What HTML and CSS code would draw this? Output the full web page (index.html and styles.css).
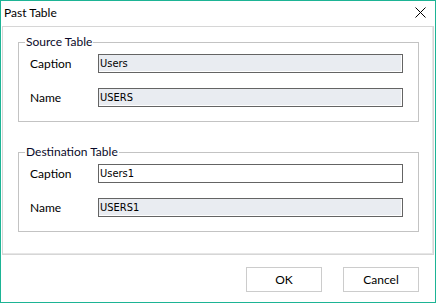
FILE: index.html
```html
<!DOCTYPE html>
<html lang="en">

<head>
    <meta charset="UTF-8">
    <title>Past Table</title>
    <link rel="stylesheet" href="styles.css">
</head>

<body>
    <div class="window">
        <div class="titlebar">
            <span class="title">Past Table</span>
            <svg class="close" width="11" height="11" viewBox="0 0 11 11">
                <path d="M0.5 0.5 L10.5 10.5 M10.5 0.5 L0.5 10.5" stroke="#000" stroke-width="1" fill="none" />
            </svg>
        </div>

        <div class="panel">
            <fieldset class="group">
                <legend>Source Table</legend>
                <div class="row">
                    <label>Caption</label>
                    <input class="field readonly" type="text" value="Users" readonly>
                </div>
                <div class="row">
                    <label>Name</label>
                    <input class="field readonly" type="text" value="USERS" readonly>
                </div>
            </fieldset>

            <fieldset class="group second">
                <legend>Destination Table</legend>
                <div class="row">
                    <label>Caption</label>
                    <input class="field" type="text" value="Users1">
                </div>
                <div class="row">
                    <label>Name</label>
                    <input class="field readonly" type="text" value="USERS1" readonly>
                </div>
            </fieldset>
        </div>

        <div class="footer">
            <button>OK</button>
            <button>Cancel</button>
        </div>
    </div>
</body>

</html>
```

FILE: styles.css
```css
body {
    margin: 0;
    font-family: 'Lato', 'Liberation Sans', sans-serif;
    font-size: 12px;
    color: #000;
}

.window {
    width: 436px;
    height: 303px;
    box-sizing: border-box;
    border: 1px solid #1db495;
    background-color: #fff;
    display: flex;
    flex-direction: column;
}

.titlebar {
    height: 25px;
    display: flex;
    align-items: center;
    justify-content: space-between;
    padding: 0 9px 0 3px;
}

.title {
    font-size: 12px;
    margin-top: -2px;
}

.close {
    margin-top: -2px;
}

.panel {
    height: 229px;
    box-sizing: border-box;
    margin: 0 1px;
    border: 1px solid #d6d6d6;
    box-shadow: inset -1px -1px 0 #e6e6e6;
    padding: 7px 0 0 15px;
}

.group {
    width: 401px;
    box-sizing: border-box;
    margin: 0;
    padding: 0 0 14px 0;
    border: 1px solid #c3c3c3;
}

.group.second {
    margin-top: 22px;
}

.group legend {
    padding: 0 1px;
    margin-left: 6px;
    line-height: 16px;
    color: #0a0a2a;
}

.row {
    display: flex;
    align-items: center;
    margin-top: 4px;
    padding-left: 11px;
}

.row + .row {
    margin-top: 15px;
}

.row label {
    width: 68px;
}

.field {
    width: 305px;
    height: 19px;
    box-sizing: border-box;
    margin: 0;
    padding: 0 1px;
    border: 1px solid #646464;
    background-color: #fff;
    font-family: 'DejaVu Sans Condensed', 'DejaVu Sans', sans-serif;
    font-size: 11px;
    color: #000;
    outline: none;
}

.field.readonly {
    background-color: #e9ecf1;
    box-shadow: inset -1px -1px 0 #fff;
}

.footer {
    display: flex;
    justify-content: flex-end;
    gap: 21px;
    padding: 12px 16px 0 0;
}

button {
    width: 76px;
    height: 25px;
    margin: 0;
    border: 1px solid #cccccc;
    background-color: #fff;
    font-family: 'Lato', 'Liberation Sans', sans-serif;
    font-size: 12px;
    color: #000;
}
```
